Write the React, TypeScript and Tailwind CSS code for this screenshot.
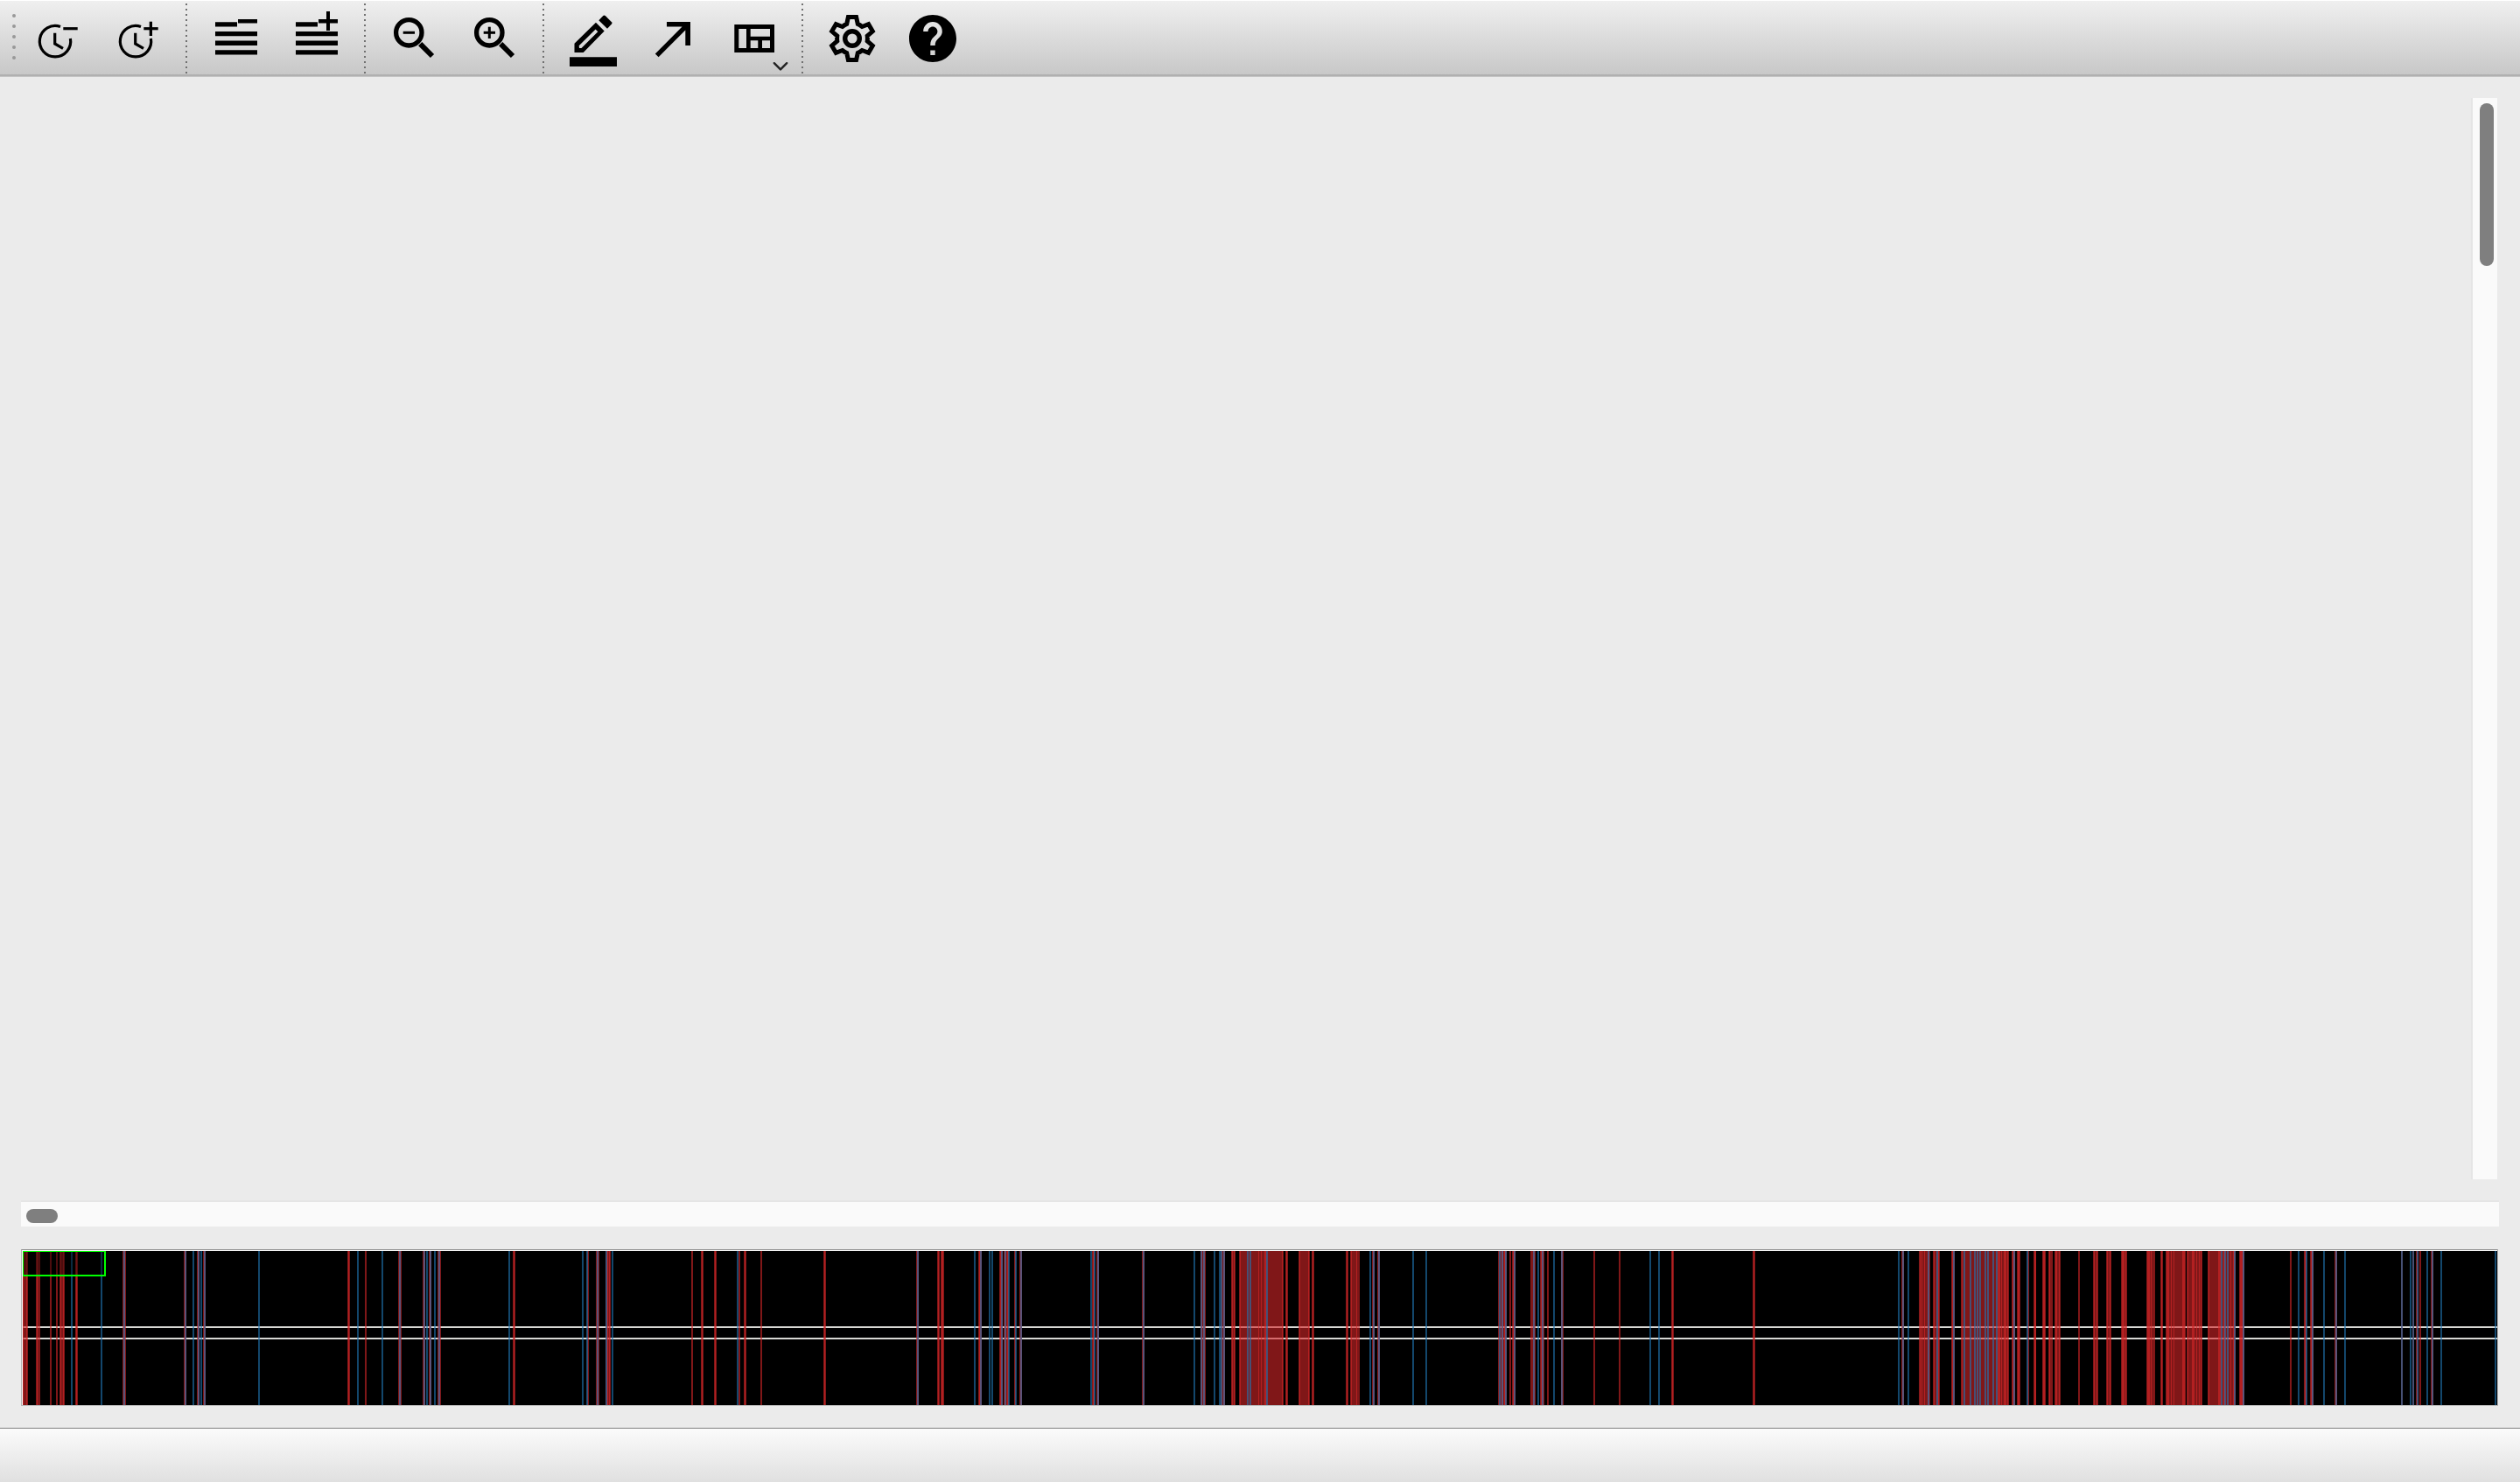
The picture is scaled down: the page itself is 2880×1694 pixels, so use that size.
import type { ReactNode } from "react";

type Span = [number, number];

const ORIGIN = 26;

/* Each entry is [x, width]; overlapping entries deepen the colour. */
const redSpans: Span[] = [
  [26, 6], [26, 1], [30, 1], [41, 5], [42, 1], [57, 2], [64, 2], [68, 6], [69, 1], [72, 1],
  [86, 2], [87, 2], [140, 4], [141, 2], [210, 3], [211, 2], [225, 3], [226, 2], [232, 3], [233, 2],
  [397, 2], [398, 2], [417, 2], [455, 4], [456, 2], [483, 3], [484, 2], [490, 3], [491, 2],
  [500, 4], [501, 2], [586, 2], [587, 2], [671, 2], [681, 4], [682, 2], [692, 6], [694, 1], [696, 1],
  [790, 2], [801, 2], [802, 2], [816, 2], [817, 2], [844, 2], [850, 2], [851, 2], [869, 2],
  [941, 2], [942, 2], [1047, 3], [1048, 2], [1071, 2], [1072, 2], [1075, 4], [1076, 2],
  [1118, 4], [1119, 1], [1120, 2], [1142, 4], [1143, 1], [1144, 2], [1147, 3], [1148, 2],
  [1150, 2], [1151, 2], [1159, 2], [1165, 3], [1166, 2], [1248, 3], [1249, 1], [1253, 3], [1254, 2],
  [1305, 3], [1306, 2], [1372, 6], [1372, 2], [1375, 2], [1395, 5], [1398, 2], [1407, 5], [1408, 1], [1410, 1],
  [1416, 51], [1417, 1], [1438, 1], [1441, 1], [1445, 2], [1465, 1], [1469, 2], [1470, 2],
  [1484, 13], [1485, 1], [1495, 1], [1499, 2], [1500, 2], [1538, 2], [1539, 2], [1543, 11], [1544, 1], [1550, 1],
  [1568, 3], [1569, 2], [1574, 3], [1575, 2], [1712, 10], [1716, 2], [1719, 1], [1720, 2], [1725, 2],
  [1728, 4], [1729, 1], [1730, 2], [1749, 6], [1752, 2], [1760, 5], [1761, 1], [1762, 2], [1768, 2],
  [1784, 3], [1784, 2], [1821, 2], [1850, 2], [1910, 2], [1911, 2], [2003, 2], [2004, 2],
  [2173, 3], [2174, 2], [2193, 13], [2194, 1], [2196, 1], [2199, 1], [2203, 2], [2209, 8], [2210, 1], [2215, 1],
  [2230, 4], [2231, 1], [2232, 2], [2241, 55], [2242, 1], [2283, 3], [2287, 1], [2290, 3], [2294, 1],
  [2299, 4], [2300, 1], [2301, 2], [2305, 4], [2306, 2], [2317, 2], [2324, 3], [2325, 2],
  [2334, 4], [2335, 2], [2341, 5], [2342, 1], [2348, 7], [2349, 2], [2353, 1], [2375, 2],
  [2392, 6], [2393, 1], [2396, 1], [2407, 6], [2408, 1], [2411, 1], [2424, 7], [2425, 3], [2429, 1],
  [2453, 10], [2454, 3], [2458, 1], [2469, 2], [2470, 2], [2475, 23], [2476, 3], [2481, 1], [2484, 1], [2494, 3],
  [2499, 18], [2500, 1], [2505, 3], [2510, 1], [2513, 1], [2515, 1], [2523, 32], [2524, 1], [2535, 3],
  [2541, 2], [2549, 1], [2552, 1], [2553, 2], [2559, 6], [2560, 5], [2617, 2], [2633, 3], [2634, 1],
  [2640, 4], [2641, 1], [2642, 2], [2668, 3], [2669, 2], [2744, 2], [2757, 2], [2761, 3], [2765, 2],
  [2778, 3], [2779, 2],
];

const blueSpans: Span[] = [
  [81, 2], [115, 2], [141, 2], [211, 2], [220, 2], [226, 2], [229, 2], [233, 2], [295, 2],
  [408, 2], [436, 2], [456, 2], [484, 2], [487, 2], [491, 2], [496, 2], [501, 2], [581, 2],
  [665, 2], [670, 2], [682, 2], [692, 2], [699, 2], [842, 2], [1048, 2], [1113, 2], [1120, 2],
  [1130, 2], [1133, 2], [1144, 2], [1148, 2], [1152, 2], [1160, 2], [1166, 2], [1246, 2], [1250, 2],
  [1254, 2], [1306, 2], [1364, 2], [1372, 2], [1375, 2], [1387, 2], [1393, 4], [1398, 2],
  [1425, 2], [1428, 2], [1447, 2], [1565, 2], [1569, 2], [1575, 2], [1614, 2], [1629, 2],
  [1713, 2], [1716, 2], [1720, 2], [1730, 2], [1752, 2], [1757, 2], [1762, 2], [1775, 2], [1784, 2],
  [1885, 2], [1895, 2], [2169, 2], [2174, 2], [2180, 2], [2203, 2], [2213, 2], [2232, 2],
  [2244, 2], [2251, 2], [2256, 2], [2259, 2], [2262, 2], [2268, 2], [2271, 2], [2277, 2], [2281, 2],
  [2301, 2], [2316, 2], [2538, 2], [2542, 2], [2545, 2], [2553, 2], [2563, 2], [2626, 2], [2635, 2],
  [2642, 2], [2655, 2], [2669, 2], [2679, 2], [2744, 2], [2754, 2], [2757, 2], [2762, 2], [2773, 2],
  [2779, 2], [2789, 2], [2851, 2],
];

function ToolButton({ label, children }: { label: string; children: ReactNode }) {
  return (
    <button type="button" aria-label={label} title={label} className="block h-[84px] w-[92px] shrink-0">
      <svg viewBox="0 0 92 84" className="block size-full" fill="black" aria-hidden="true">
        {children}
      </svg>
    </button>
  );
}

function Separator() {
  return (
    <div role="separator" className="flex h-[84px] w-5 shrink-0 flex-col gap-1 pt-1 pl-2">
      {Array.from({ length: 14 }, (_, i) => (
        <span key={i} className="size-0.5 shrink-0 bg-[#707070]" />
      ))}
    </div>
  );
}

function Clock() {
  return (
    <g fill="none" stroke="black" strokeWidth="3.2">
      <path d="M49 30.6A17.7 17.7 0 1 0 60.4 44" />
      <path d="M42.7 37.7V50L52 55.3" />
      <path d="M52.3 32.7H68.7" />
    </g>
  );
}

function TrackLines() {
  return (
    <g>
      <path d="M22 25.3H47V30.6H22zM48 22H70V26.6H48z" />
      <path d="M22 36H70V41.3H22zM22 46.6H70V52H22zM22 57.3H70V62.6H22z" />
    </g>
  );
}

function Magnifier() {
  return (
    <g fill="none" stroke="black">
      <circle cx="39.3" cy="37.3" r="14.7" strokeWidth="5.3" />
      <path d="M52.2 50.2L66 64" strokeWidth="6" />
      <path d="M32.7 37.3H46" strokeWidth="3" />
    </g>
  );
}

function Toolbar() {
  return (
    <header
      role="toolbar"
      aria-label="Main toolbar"
      className="flex h-[88px] shrink-0 items-start border-b border-[#c4c4c4] bg-linear-to-b from-[#f0f0f0] to-[#c7c7c7] shadow-[inset_0_1px_0_#ffffff,inset_0_-2px_0_#b0b0b0]"
    >
      <div className="flex w-5 shrink-0 flex-col gap-2 pt-4 pl-3.5">
        {Array.from({ length: 5 }, (_, i) => (
          <span key={i} className="size-1 rounded-full bg-[#989898]" />
        ))}
      </div>
      <ToolButton label="Decrease time">
        <Clock />
      </ToolButton>
      <ToolButton label="Increase time">
        <Clock />
        <path d="M58.7 24.7H62V41H58.7z" />
      </ToolButton>
      <Separator />
      <ToolButton label="Remove row">
        <TrackLines />
      </ToolButton>
      <ToolButton label="Add row">
        <TrackLines />
        <path d="M57 13H61V35H57z" />
      </ToolButton>
      <Separator />
      <ToolButton label="Zoom out">
        <Magnifier />
      </ToolButton>
      <ToolButton label="Zoom in">
        <Magnifier />
        <path d="M37.8 30.7H40.8V44H37.8z" />
      </ToolButton>
      <Separator />
      <ToolButton label="Line colour">
        <path
          fillRule="evenodd"
          d="M24.5 60V49.8L49 25.7L58.7 35.5L34.7 60zM30 55H32.5L51.3 36.2L48.6 33.5L29.7 52.3z"
        />
        <path d="M52.3 23.3L57.3 18Q58.5 17 59.8 18L67 25.2Q68 26.4 67 27.6L62 32.8z" />
        <path d="M19 65.2H73V76H19z" />
      </ToolButton>
      <ToolButton label="Arrow">
        <path d="M38 25H65V52H59.3V34.6L28.6 65.2L24.8 61.4L55.6 30.6H38z" />
      </ToolButton>
      <ToolButton label="Layout">
        <path
          fillRule="evenodd"
          d="M23.3 28H69V60H23.3zM28.3 33V55H37V33zM41.7 33V41.7H64V33zM41.7 46.3V55H50.3V46.3zM55 46.3V55H64V46.3z"
        />
        <path
          d="M68.8 72.2L76 79.4L83.2 72.2"
          fill="none"
          stroke="#222222"
          strokeWidth="2.4"
          strokeLinecap="round"
          strokeLinejoin="round"
        />
      </ToolButton>
      <Separator />
      <ToolButton label="Settings">
        <g transform="translate(46 44)" fill="none" stroke="black" strokeWidth="5">
          <path d="M-4.6 -24.4H4.6L6.3 -16.6Q9 -15.4 11.3 -13.5L18.6 -16.3L23.3 -8.2L17.2 -3Q17.6 0 17.2 3L23.3 8.2L18.6 16.3L11.3 13.5Q9 15.4 6.3 16.6L4.6 24.4H-4.6L-6.3 16.6Q-9 15.4 -11.3 13.5L-18.6 16.3L-23.3 8.2L-17.2 3Q-17.6 0 -17.2 -3L-23.3 -8.2L-18.6 -16.3L-11.3 -13.5Q-9 -15.4 -6.3 -16.6z" />
          <circle r="8.3" strokeWidth="5.4" />
        </g>
      </ToolButton>
      <ToolButton label="Help">
        <path
          transform="translate(13.6 11.6) scale(2.7)"
          d="M12 2C6.48 2 2 6.48 2 12s4.48 10 10 10 10-4.48 10-10S17.52 2 12 2zm1 17h-2v-2h2v2zm2.07-7.75l-.9.92C13.45 12.9 13 13.5 13 15h-2v-.5c0-1.1.45-2.1 1.17-2.83l1.24-1.26c.37-.36.59-.86.59-1.41 0-1.1-.9-2-2-2s-2 .9-2 2H8c0-2.21 1.79-4 4-4s4 1.79 4 4c0 .88-.36 1.68-.93 2.25z"
        />
      </ToolButton>
    </header>
  );
}

function Overview() {
  return (
    <section
      aria-label="Overview"
      className="mr-px border border-[#b4b4b4] border-t-[#888888]"
    >
      <div className="border-t border-l border-white bg-black">
        <svg
          viewBox="0 0 2828 176"
          preserveAspectRatio="none"
          shapeRendering="crispEdges"
          className="block h-44 w-full"
          role="img"
          aria-label="Event timeline"
        >
          <rect y="86" width="2828" height="2" fill="#d8d8d4" />
          <rect y="99" width="2828" height="2" fill="#d8d8d4" />
          <g fill="#d62728" fillOpacity="0.6">
            {redSpans.map(([x, w], i) => (
              <rect key={i} x={x - ORIGIN} width={w} height="176" />
            ))}
          </g>
          <g fill="#1f77b4" fillOpacity="0.6">
            {blueSpans.map(([x, w], i) => (
              <rect key={i} x={x - ORIGIN} width={w} height="176" />
            ))}
          </g>
          <rect width="94" height="28" fill="black" fillOpacity="0.4" stroke="#00ff00" strokeWidth="2" />
        </svg>
      </div>
    </section>
  );
}

export default function App() {
  return (
    <div className="flex min-h-screen flex-col bg-[#ebebeb]">
      <Toolbar />
      <main className="flex flex-1 flex-col px-6 pt-6 pb-[25px]">
        <div className="mr-0.5 flex flex-1">
          <div className="flex-1" />
          <div
            role="scrollbar"
            aria-label="Vertical scroll"
            aria-controls="overview"
            aria-orientation="vertical"
            aria-valuenow={0}
            className="w-[30px] border-l-2 border-[#e5e5e5] bg-[#fafafa] pt-1.5 pl-2"
          >
            <div className="h-[186px] w-4 rounded-full bg-[#7f7f7f]" />
          </div>
        </div>
        <div
          role="scrollbar"
          aria-label="Horizontal scroll"
          aria-controls="overview"
          aria-orientation="horizontal"
          aria-valuenow={0}
          className="mt-6 mb-[26px] h-[30px] border-t-2 border-[#e5e5e5] bg-[#fafafa] pt-2 pl-1.5"
        >
          <div className="h-4 w-9 rounded-full bg-[#7f7f7f]" />
        </div>
        <div id="overview">
          <Overview />
        </div>
      </main>
      <footer className="h-[62px] shrink-0 border-t border-[#808080] bg-linear-to-b from-[#fbfbfb] to-[#e0e0e0]" />
    </div>
  );
}
